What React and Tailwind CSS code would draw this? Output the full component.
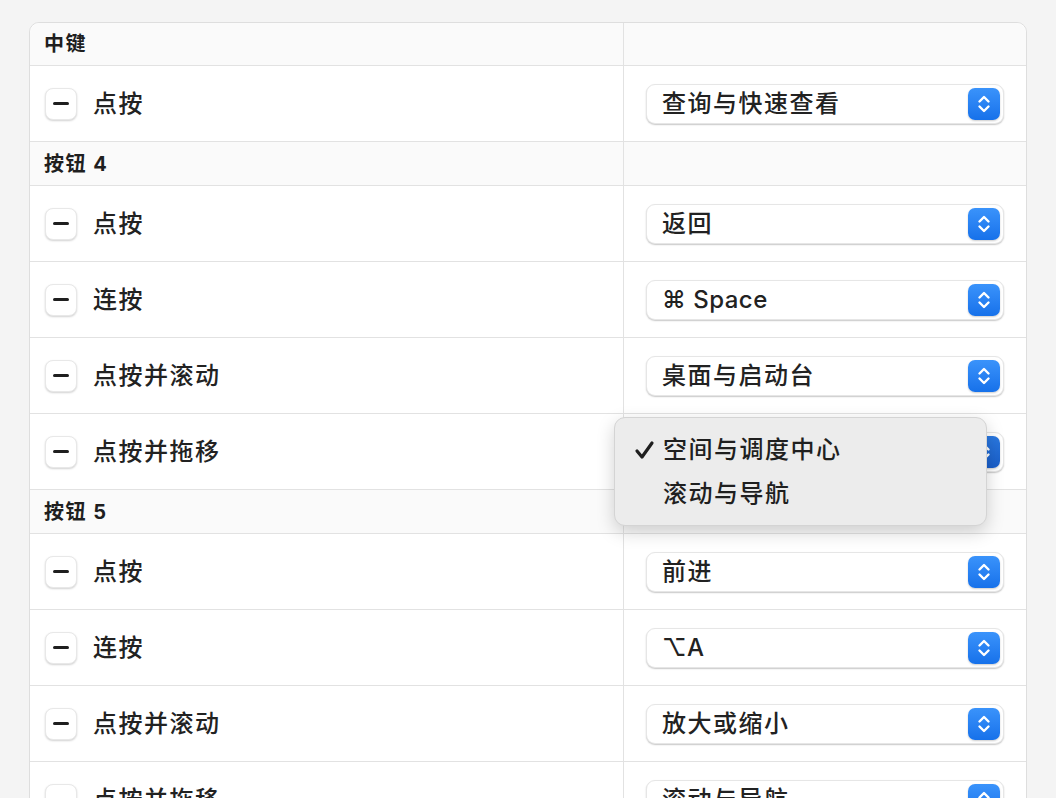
import React from "react";

const FONT = { fontFamily: '"Inter", "Noto Sans CJK SC", "DejaVu Sans", sans-serif' };

function Stepper({ dim }) {
  return (
    <div
      className={
        "w-[32px] h-[32px] rounded-[7px] flex items-center justify-center shadow-[0_1px_2px_rgba(0,0,0,0.2)] " +
        (dim ? "bg-gradient-to-b from-[#2a78e0] to-[#1a5ec8]" : "bg-gradient-to-b from-[#3a93fb] to-[#1671ea]")
      }
    >
      <svg width="18" height="22" viewBox="0 0 18 22" fill="none" stroke="white" strokeWidth="2.4" strokeLinecap="round" strokeLinejoin="round">
        <path d="M4.5 8.5 L9 4 L13.5 8.5" />
        <path d="M4.5 13.5 L9 18 L13.5 13.5" />
      </svg>
    </div>
  );
}

function Select({ value, dim, latin }) {
  return (
    <div className="w-[358px] h-[40px] rounded-[9px] bg-white border border-[#e6e6e6] shadow-[0_1px_1.5px_rgba(0,0,0,0.22)] flex items-center justify-between pl-[15px] pr-[3px]">
      <span
        className={
          "text-[24px] font-medium text-[#222222] leading-none " +
          (latin ? "tracking-[0.5px]" : "tracking-[1.5px]")
        }
      >
        {value}
      </span>
      <Stepper dim={dim} />
    </div>
  );
}

function Minus() {
  return (
    <div className="w-[32px] h-[32px] rounded-[8px] bg-white border border-[#e8e8e8] shadow-[0_1px_2px_rgba(0,0,0,0.18)] flex items-center justify-center">
      <div className="w-[16px] h-[3px] rounded-full bg-[#1f1f1f]" />
    </div>
  );
}

function Header({ title, first }) {
  return (
    <div className={"flex bg-[#fafafa] " + (first ? "h-[42px]" : "h-[44px] border-t border-[#e2e2e2]")}>
      <div className="w-[594px] border-r border-[#e2e2e2] flex items-center pl-[14px]">
        <span className="text-[20px] tracking-[1.5px] font-bold text-[#1f1f1f]">{title}</span>
      </div>
      <div className="flex-1" />
    </div>
  );
}

function Row({ label, value, children, dim, latin }) {
  return (
    <div className="relative flex h-[76px] bg-white border-t border-[#e2e2e2]">
      <div className="w-[594px] border-r border-[#e2e2e2] flex items-center pl-[15px] gap-[16px]">
        <Minus />
        <span className="text-[24px] tracking-[1.5px] font-medium text-[#222222]">{label}</span>
      </div>
      <div className="flex-1 flex items-center pl-[22px]">
        <Select value={value} dim={dim} latin={latin} />
      </div>
      {children}
    </div>
  );
}

function Menu() {
  return (
    <div className="absolute left-[584px] top-[3px] z-10 w-[373px] h-[109px] rounded-[11px] bg-[#ececec] border border-[#d4d4d4] shadow-[0_6px_18px_rgba(0,0,0,0.18)] flex flex-col pt-[15px] pl-[19px]">
      <div className="flex items-center h-[34px]">
        <span className="w-[29px] flex items-center">
          <svg width="21" height="20" viewBox="0 0 21 20" fill="none" stroke="#1f1f1f" strokeWidth="3.2" strokeLinecap="round" strokeLinejoin="round">
            <path d="M3 11 L8 17 L18 3" />
          </svg>
        </span>
        <span className="text-[24px] tracking-[1.5px] font-medium text-[#1f1f1f]">空间与调度中心</span>
      </div>
      <div className="flex items-center h-[34px] mt-[10px]">
        <span className="w-[29px]" />
        <span className="text-[24px] tracking-[1.5px] font-medium text-[#1f1f1f]">滚动与导航</span>
      </div>
    </div>
  );
}

export default function App() {
  return (
    <div className="w-[1056px] h-[798px] overflow-hidden bg-[#f4f4f4] pt-[22px] pl-[29px]" style={FONT}>
      <div className="w-[998px] rounded-t-[10px] border border-[#dedede] bg-white">
        <div className="rounded-t-[10px] overflow-hidden">
          <Header title="中键" first />
        </div>
        <Row label="点按" value="查询与快速查看" />
        <Header title="按钮 4" />
        <Row label="点按" value="返回" />
        <Row label="连按" value="⌘ Space" latin />
        <Row label="点按并滚动" value="桌面与启动台" />
        <Row label="点按并拖移" value="空间与调度中心" dim>
          <Menu />
        </Row>
        <Header title="按钮 5" />
        <Row label="点按" value="前进" />
        <Row label="连按" value="⌥A" latin />
        <Row label="点按并滚动" value="放大或缩小" />
        <Row label="点按并拖移" value="滚动与导航" />
      </div>
    </div>
  );
}
